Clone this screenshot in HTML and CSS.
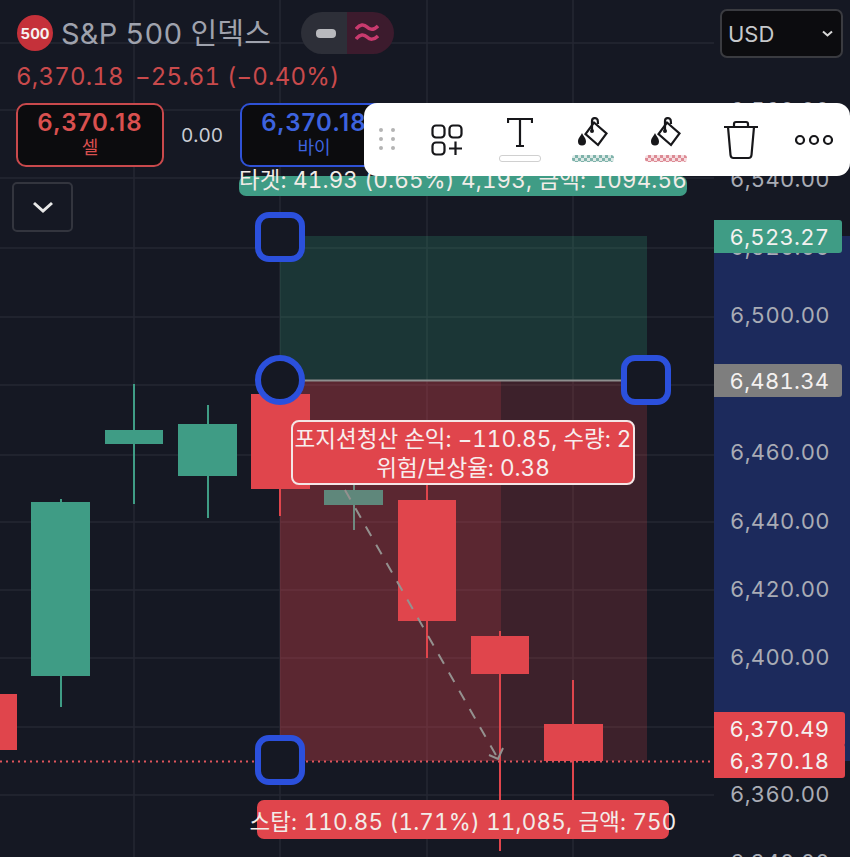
FILE: index.html
```html
<!DOCTYPE html>
<html lang="ko">
<head>
<meta charset="utf-8">
<title>S&amp;P 500 인덱스</title>
<link rel="stylesheet" href="styles.css">
</head>
<body>
<main class="stage">
  <svg class="chart" width="850" height="857" viewBox="0 0 850 857" aria-hidden="true">
    <g class="grid">
      <path d="M134 0V857M280 0V857M427 0V857M573 0V857"/>
      <path d="M0 43H714M0 110H714M0 178H714M0 248H714M0 317H714M0 385H714M0 455H714M0 522H714M0 590H714M0 658H714M0 727H714M0 795H714"/>
    </g>
    <rect class="axis-range" x="714" y="236" width="136" height="525"/>

    <path class="wick up" d="M61 499V707M134 384V504M208 405V518"/>
    <rect class="up" x="31" y="502" width="59" height="174"/>
    <rect class="up" x="105" y="430" width="58" height="14"/>
    <rect class="up" x="178" y="424" width="59" height="52"/>
    <rect class="down" x="-10" y="694" width="27" height="56"/>

    <rect class="zone-profit" x="280" y="236" width="367" height="144"/>
    <rect class="zone-loss-near" x="280" y="381" width="221" height="380"/>
    <rect class="zone-loss-far" x="501" y="381" width="146" height="380"/>
    <path class="entry-line" d="M280 380.500H647"/>

    <path class="wick down" d="M280 400V516M427 485V658M500 631V851M573 680V800"/>
    <path class="wick muted" d="M354 480V530"/>
    <rect class="down" x="251" y="394" width="59" height="95"/>
    <rect class="muted" x="324" y="490" width="59" height="15"/>
    <rect class="down" x="398" y="500" width="58" height="121"/>
    <rect class="down" x="471" y="636" width="58" height="38"/>
    <rect class="down" x="544" y="724" width="59" height="37"/>

    <path class="dashed" d="M345 490L497 757"/>
    <path class="arrow" d="M489 755L498 759L503 748"/>
    <path class="price-line" d="M0 761.500H714"/>

    <rect class="handle" x="258" y="215" width="44" height="44" rx="11"/>
    <circle class="handle" cx="280" cy="380" r="22"/>
    <rect class="handle" x="624" y="358" width="44" height="44" rx="11"/>
    <rect class="handle" x="258" y="738" width="44" height="44" rx="11"/>
  </svg>

  <div class="axis">
    <span class="tick">6,560.00</span>
    <span class="tick">6,540.00</span>
    <span class="tick">6,520.00</span>
    <span class="tick">6,500.00</span>
    <span class="tick">6,480.00</span>
    <span class="tick">6,460.00</span>
    <span class="tick">6,440.00</span>
    <span class="tick">6,420.00</span>
    <span class="tick">6,400.00</span>
    <span class="tick">6,380.00</span>
    <span class="tick">6,360.00</span>
    <span class="tick">6,340.00</span>
  </div>
  <span class="axis-tag tag-target">6,523.27</span>
  <span class="axis-tag tag-entry">6,481.34</span>
  <span class="axis-tag tag-stop">6,370.49</span>
  <span class="axis-tag tag-last">6,370.18</span>

  <div class="pos-label label-target">타겟: 41.93 (0.65%) 4,193, 금액: 1094.56</div>
  <div class="pos-label label-stop">스탑: 110.85 (1.71%) 11,085, 금액: 750</div>
  <div class="pos-tooltip">포지션청산 손익: −110.85, 수량: 2<br>위험/보상율: 0.38</div>

  <header class="head">
    <div class="title-row">
      <span class="logo">500</span>
      <h1 class="title">S&amp;P 500 인덱스</h1>
      <div class="modes">
        <span class="mode mode-flat"><i class="dash"></i></span>
        <span class="mode mode-wave">
          <svg width="24" height="20" viewBox="0 0 24 20"><path d="M1 6C5 1 9 1 12 4S19 7 23 3M1 16C5 11 9 11 12 14S19 17 23 13"/></svg>
        </span>
      </div>
    </div>
    <div class="quote">
      <span>6,370.18</span><span>−25.61 (−0.40%)</span>
    </div>
    <div class="trade-row">
      <button class="trade sell"><b>6,370.18</b><span>셀</span></button>
      <span class="spread">0.00</span>
      <button class="trade buy"><b>6,370.18</b><span>바이</span></button>
    </div>
    <button class="collapse" aria-label="접기">
      <svg width="24" height="14" viewBox="0 0 24 14"><path d="M3 3L12 11L21 3"/></svg>
    </button>
  </header>

  <div class="currency"><span>USD</span>
    <svg width="11" height="7" viewBox="0 0 11 7"><path d="M1 1.500L5.500 5.500L10 1.500"/></svg>
  </div>

  <nav class="toolbar">
    <span class="grip"><i></i><i></i><i></i><i></i><i></i><i></i></span>
    <span class="tool">
      <svg width="32" height="32" viewBox="0 0 32 32"><rect x="1.500" y="1.500" width="12" height="12" rx="3.500"/><rect x="18.500" y="1.500" width="12" height="12" rx="3.500"/><rect x="1.500" y="18.500" width="12" height="12" rx="3.500"/><path d="M24.500 17.500V31M18 24.500H31"/></svg>
    </span>
    <span class="tool tool-stack">
      <svg width="26" height="32" viewBox="0 0 26 32"><path d="M1 7V3H25V7M13 3V30M9 30H17"/></svg>
      <i class="swatch swatch-white"></i>
    </span>
    <span class="tool tool-stack">
      <svg class="bucket" width="32" height="32" viewBox="0 0 32 32"><path d="M17 6.500L29.500 17.500L21 29L8.500 18Z"/><path d="M15 9V5C15 2 19 1 20.500 3.500C21 5 21 6 21 8"/><path d="M15 9V14"/><circle class="ink" cx="15" cy="15" r="2"/><path class="ink" d="M5 17C6 20 9 22 9 25.500A4 4 0 0 1 1 25.500C1 22 4 20 5 17Z"/></svg>
      <i class="swatch swatch-teal"></i>
    </span>
    <span class="tool tool-stack">
      <svg class="bucket" width="32" height="32" viewBox="0 0 32 32"><path d="M17 6.500L29.500 17.500L21 29L8.500 18Z"/><path d="M15 9V5C15 2 19 1 20.500 3.500C21 5 21 6 21 8"/><path d="M15 9V14"/><circle class="ink" cx="15" cy="15" r="2"/><path class="ink" d="M5 17C6 20 9 22 9 25.500A4 4 0 0 1 1 25.500C1 22 4 20 5 17Z"/></svg>
      <i class="swatch swatch-red"></i>
    </span>
    <span class="tool tool-shift">
      <svg width="36" height="40" viewBox="0 0 36 40"><path d="M1 7H35M11 7V4C11 2.500 12 2 13 2H23C24 2 25 2.500 25 4V7M5 7L7.500 35C7.700 37 9 38 10.500 38H25.500C27 38 28.300 37 28.500 35L31 7"/></svg>
    </span>
    <span class="tool">
      <svg width="38" height="12" viewBox="0 0 38 12"><circle cx="5" cy="6" r="4"/><circle cx="19" cy="6" r="4"/><circle cx="33" cy="6" r="4"/></svg>
    </span>
  </nav>
</main>
</body>
</html>
```
FILE: styles.css
```css
* { box-sizing: border-box; }
html, body { margin: 0; padding: 0; background: #151823; }
body { font-family: Inter, "Noto Sans CJK KR", sans-serif; font-variant-numeric: tabular-nums; overflow: hidden; }

.stage { position: relative; width: 850px; height: 857px; overflow: hidden; color: #c9ccd3; }
.chart { position: absolute; inset: 0; display: block; }

.grid path { stroke: #242733; stroke-width: 1.500; fill: none; }
.axis-range { fill: #1c2a5c; }
.up { fill: #3f9c85; }
.down { fill: #e0454c; }
.muted { fill: #5f877b; }
.wick { fill: none; stroke-width: 2; }
.wick.up { stroke: #3f9c85; }
.wick.down { stroke: #e0454c; }
.wick.muted { stroke: #6f8a80; }
.zone-profit { fill: rgba(50, 165, 125, .22); }
.zone-loss-near { fill: rgba(224, 69, 76, .35); }
.zone-loss-far { fill: rgba(224, 69, 76, .2); }
.entry-line { stroke: #8e8e8e; stroke-width: 2; fill: none; }
.dashed { stroke: #94918f; stroke-width: 2; stroke-dasharray: 11 10; fill: none; }
.arrow { stroke: #94918f; stroke-width: 2; fill: none; }
.price-line { stroke: #e0555c; stroke-width: 2; stroke-dasharray: 2 4; fill: none; }
.handle { fill: #151823; stroke: #2b50dc; stroke-width: 6; }

/* price axis */
.axis { position: absolute; top: 76px; left: 714px; width: 136px; display: flex; flex-direction: column; }
.tick { height: 68.400px; display: flex; align-items: center; justify-content: center; padding-right: 4px; font-size: 22px; letter-spacing: .3px; color: #a9acb5; }
.axis-tag { position: absolute; left: 714px; display: flex; align-items: center; justify-content: center; font-size: 22px; letter-spacing: .3px; color: #f4f1f0; border-radius: 0 3px 3px 0; }
.tag-target { top: 220px; width: 128px; height: 33px; padding-left: 3px; background: #3f9c85; }
.tag-entry { top: 364px; width: 128px; height: 33px; padding-left: 3px; background: #7e7e7e; }
.tag-stop { top: 712px; width: 131px; height: 34px; background: #e0454c; }
.tag-last { top: 744px; width: 131px; height: 34px; background: #e0454c; }

/* position labels */
.pos-label { position: absolute; display: flex; justify-content: center; align-items: center; white-space: nowrap; font-size: 22.400px; letter-spacing: .2px; color: #f2ece8; border-radius: 7px; }
.label-target { top: 176px; left: 239px; width: 448px; height: 20px; padding-bottom: 16px; background: #3f9c85; }
.label-stop { top: 800px; left: 257px; width: 412px; height: 39px; background: #e0454c; }
.pos-tooltip { position: absolute; top: 420px; left: 291px; width: 344px; height: 65px; display: flex; align-items: center; justify-content: center; text-align: center; white-space: nowrap; font-size: 22.500px; line-height: 29px; color: #f7eeee; background: #e0454c; border: 2px solid #f3e6e6; border-radius: 8px; }

/* header */
.head { position: absolute; top: 12px; left: 12px; display: flex; flex-direction: column; align-items: flex-start; }
.title-row { display: flex; align-items: center; height: 42px; padding-left: 5px; }
.logo { width: 36px; height: 36px; border-radius: 50%; background: #c5313a; color: #f6f1f1; font-size: 15px; font-weight: 700; display: flex; align-items: center; justify-content: center; }
.title { margin: 0 0 5px 8px; font-size: 29px; font-weight: 400; letter-spacing: .2px; color: #9fa2ad; white-space: nowrap; }
.modes { display: flex; margin-left: 30px; height: 42px; border-radius: 21px; overflow: hidden; }
.mode { width: 46px; display: flex; align-items: center; justify-content: center; }
.mode-flat { background: #2d2f38; padding-left: 4px; }
.mode-wave { width: 47px; background: #3c1b2d; padding-right: 8px; }
.mode-wave path { fill: none; stroke: #c93a6e; stroke-width: 3.500; }
.dash { width: 20px; height: 9px; border-radius: 4px; background: #b8b9bd; }
.quote { display: flex; gap: 11px; margin: 8px 0 0 4px; font-size: 24px; letter-spacing: .2px; line-height: 30px; color: #c94a4c; white-space: nowrap; }
.trade-row { display: flex; align-items: center; margin: 11px 0 0 4px; }
.trade { width: 148px; height: 64px; padding: 0; display: flex; flex-direction: column; align-items: center; justify-content: center; background: #0c0c0e; border-radius: 10px; border: 2px solid; font-family: inherit; }
.trade b { font-size: 24px; line-height: 27px; font-weight: 600; letter-spacing: 1.100px; margin-top: -2px; }
.trade span { font-size: 18px; line-height: 24px; }
.sell { border-color: #c9494c; color: #d9504f; }
.buy { border-color: #2f52d6; color: #3d63df; }
.spread { width: 76px; text-align: center; font-size: 19px; color: #c9ccd3; }
.collapse { width: 61px; height: 50px; margin-top: 15px; padding: 0; display: flex; align-items: center; justify-content: center; background: transparent; border: 2px solid #33353e; border-radius: 5px; }
.collapse path { fill: none; stroke: #e8e8e8; stroke-width: 3; }

.currency { position: absolute; top: 9px; left: 720px; width: 123px; height: 49px; display: flex; align-items: center; justify-content: space-between; padding: 0 8px 0 6px; background: #0c0c0f; border: 2px solid #3a3b40; border-radius: 7px; font-size: 22px; color: #c6c8cb; }
.currency path { fill: none; stroke: #d8d8d8; stroke-width: 2; }

/* floating toolbar */
.toolbar { position: absolute; top: 103px; left: 364px; width: 486px; height: 73px; padding-left: 46px; display: flex; align-items: center; background: #fff; border-radius: 13px; }
.grip { position: absolute; left: 15px; top: 25px; display: grid; grid-template-columns: 4px 4px; column-gap: 8px; row-gap: 5px; }
.grip i { width: 4px; height: 4px; border-radius: 50%; background: #b4b4b4; }
.tool { flex: 0 0 73px; height: 73px; display: flex; flex-direction: column; align-items: center; justify-content: center; }
.tool-stack { justify-content: flex-start; padding-top: 13px; gap: 7px; }
.tool-shift { margin-left: 2px; }
.tool svg { display: block; }
.tool svg path, .tool svg rect, .tool svg circle { fill: none; stroke: #17171a; stroke-width: 2.200; }
.tool svg .ink { fill: #17171a; stroke: none; }
.swatch { width: 42px; height: 7px; border-radius: 3px; }
.swatch-white { background: #fff; border: 1.500px solid #d0d0d0; }
.swatch-teal { background: repeating-conic-gradient(#7fb3ab 0 25%, #dce9e6 0 50%) 0 0 / 6px 6px; }
.swatch-red { background: repeating-conic-gradient(#dd8b95 0 25%, #f6dde0 0 50%) 0 0 / 6px 6px; }
```
